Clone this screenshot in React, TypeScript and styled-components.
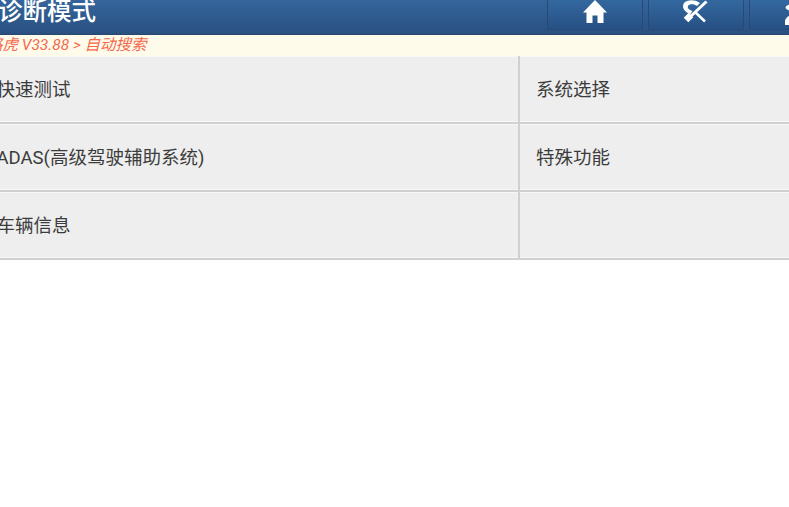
import React from "react";
import styled, { createGlobalStyle } from "styled-components";

const Global = createGlobalStyle`
  html, body { margin: 0; padding: 0; background: #fff; overflow: hidden; }
  body { font-family: Roboto, "Noto Sans CJK SC", sans-serif; }
`;

const Viewport = styled.div`
  width: 789px;
  height: 507px;
  overflow: hidden;
`;

const Page = styled.div`
  width: 1040px;
  margin-left: -2px;
`;

const Header = styled.header`
  height: 34px;
  display: flex;
  background: linear-gradient(#34659c, #2a5080);
  border-bottom: 1px solid #26476f;
`;

const Title = styled.h1`
  width: 549px;
  margin: 0;
  box-sizing: border-box;
  color: #fff;
  font: 500 24.5px/23px Roboto, "Noto Sans CJK SC", sans-serif;
  overflow: hidden;
  height: 24px;
  white-space: nowrap;
`;

const Tools = styled.div`
  display: flex;
  gap: 5px;
  height: 30px;
`;

const ToolButton = styled.div`
  width: 96px;
  box-sizing: border-box;
  display: flex;
  justify-content: center;
  background: linear-gradient(#33689f, #275084);
  border: 1px solid #234a78;
  border-top: none;
`;

const Crumb = styled.div`
  height: 21px;
  box-sizing: border-box;
  text-indent: -11px;
  background: #fffbeb;
  color: #f4694b;
  font: italic 15.5px/20px Roboto, "Noto Sans CJK SC", sans-serif;
  white-space: nowrap;
`;

const Grid = styled.div`
  display: grid;
  grid-template-columns: 520px 520px;
`;

const Cell = styled.div<{ $right?: boolean }>`
  height: 68px;
  box-sizing: border-box;
  padding: 0 0 2px ${(p) => (p.$right ? "17.5px" : "0")};
  display: flex;
  align-items: center;
  background: #eeeeee;
  color: #3c3c3c;
  font-size: 18.5px;
  text-indent: -1.5px;
  border-bottom: 2px solid #d0d0d0;
  border-left: ${(p) => (p.$right ? "2px solid #d0d0d0" : "none")};
  box-shadow: inset 0 1px 0 #f7f7f7, inset 0 -1px 0 #f7f7f7;
`;

const HomeIcon = () => (
  <svg width="26" height="26" viewBox="0 0 26 26" fill="#fff">
    <path d="M13 0 L25 12.5 L21.5 12.5 L21.5 23 L15.5 23 L15.5 15.5 L10.5 15.5 L10.5 23 L4.5 23 L4.5 12.5 L1 12.5 Z" />
  </svg>
);

const WrenchIcon = () => (
  <svg width="30" height="26" viewBox="0 0 30 26" fill="none" stroke="#fff">
    <path d="M25.5 1.5 L10 16" strokeWidth="3" />
    <path d="M10 15 L5 20" strokeWidth="6.5" />
    <path d="M13.5 11.5 L24 21.5" strokeWidth="2.5" />
    <path d="M9.5 14 C3 12 0.5 7 3 3 C6 0 13 -1 19 3 L16 6 C13 3.5 8 3.5 7 6 C6 8 8 10 11.5 11 Z" stroke="none" fill="#fff" />
  </svg>
);

const PersonIcon = () => (
  <svg width="26" height="26" viewBox="0 0 26 26" fill="#fff">
    <ellipse cx="12" cy="7.5" rx="10.5" ry="4" />
    <path d="M1 25 L1 21 C2 17 5 15 11 15 C18 15 23 17 24 25 Z" />
  </svg>
);

export default function App() {
  return (
    <Viewport>
      <Global />
      <Page>
        <Header>
          <Title>诊断模式</Title>
          <Tools>
            <ToolButton><HomeIcon /></ToolButton>
            <ToolButton><WrenchIcon /></ToolButton>
            <ToolButton><PersonIcon /></ToolButton>
          </Tools>
        </Header>
        <Crumb>路虎 V33.88 &gt; 自动搜索</Crumb>
        <Grid>
          <Cell>快速测试</Cell>
          <Cell $right>系统选择</Cell>
          <Cell>ADAS(高级驾驶辅助系统)</Cell>
          <Cell $right>特殊功能</Cell>
          <Cell>车辆信息</Cell>
          <Cell $right />
        </Grid>
      </Page>
    </Viewport>
  );
}
